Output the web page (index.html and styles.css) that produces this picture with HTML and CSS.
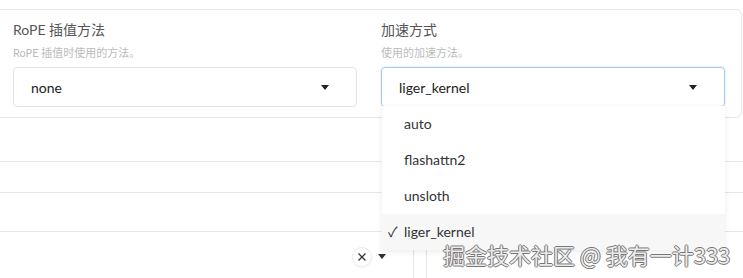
FILE: index.html
```html
<!doctype html>
<html lang="en">
<head>
<meta charset="UTF-8">
<title>加速方式</title>
<link rel="stylesheet" href="styles.css">
</head>
<body>
	<div class="page">
		<div class="card">
			<div class="field">
				<div class="label">RoPE 插值方法</div>
				<div class="info">RoPE 插值时使用的方法。</div>
				<div class="select">
					<span class="value">none</span>
					<span class="caret"></span>
				</div>
			</div>
			<div class="field">
				<div class="label">加速方式</div>
				<div class="info">使用的加速方法。</div>
				<div class="select focus">
					<span class="value">liger_kernel</span>
					<span class="caret"></span>
				</div>
				<ul class="options">
					<li>auto</li>
					<li>flashattn2</li>
					<li>unsloth</li>
					<li class="selected"><span class="check">✓</span>liger_kernel</li>
				</ul>
			</div>
		</div>

		<div class="row row1"></div>
		<div class="row row2"></div>
		<div class="row row3"></div>
		<div class="row row4">
			<div class="tools">
				<span class="clear">
					<svg width="10" height="10" viewBox="0 0 10 10"><path d="M1.5 1.5 L8.5 8.5 M8.5 1.5 L1.5 8.5" stroke="#333" stroke-width="1.3" fill="none"/></svg>
				</span>
				<span class="caret small"></span>
			</div>
			<div class="split"></div>
			<div class="split"></div>
		</div>

		<div class="mark">掘金技术社区 @ 我有一计333</div>
	</div>
</body>
</html>
```

FILE: styles.css
```css
body{
	margin:0;
	background:#fff;
	font-family:Lato, "Noto Sans CJK SC", sans-serif;
	color:#333;
}
.page{
	position:relative;
	width:743px;
	height:278px;
	overflow:hidden;
	padding-top:9px;
	box-sizing:border-box;
}
.card{
	margin-left:-10px;
	width:752px;
	height:109px;
	box-sizing:border-box;
	border:1px solid #e6e6e6;
	border-radius:0 6px 6px 0;
	padding:10px 17px 0 22px;
	display:grid;
	grid-template-columns:344px 344px;
	column-gap:24px;
	background:#fff;
}
.field{
	position:relative;
}
.label{
	font-size:14px;
	line-height:20px;
	color:#555;
}
.info{
	font-size:11px;
	line-height:16px;
	color:#bbb;
	margin-top:5px;
}
.select{
	margin-top:6px;
	height:40px;
	box-sizing:border-box;
	border:1px solid #e3e3e3;
	border-radius:4px;
	display:flex;
	align-items:center;
	justify-content:space-between;
	padding:0 27px 0 17px;
	font-size:14px;
	color:#222;
}
.select.focus{
	border-color:#a9ccee;
	box-shadow:0 0 0 1px #e8f2fc;
}
.caret{
	width:0;
	height:0;
	border-left:4px solid transparent;
	border-right:4px solid transparent;
	border-top:5px solid #222;
}
.options{
	position:absolute;
	z-index:5;
	left:1px;
	top:86px;
	width:343px;
	margin:0;
	padding:0;
	list-style:none;
	background:#fff;
	box-shadow:0 2px 6px rgba(0,0,0,0.08);
	font-size:14px;
	color:#333;
}
.options li{
	position:relative;
	height:36px;
	line-height:36px;
	padding-left:22px;
}
.options li.selected{
	background:#f7f7f7;
}
.check{
	position:absolute;
	left:6px;
	top:0;
}
.row{
	border-bottom:1px solid #e6e6e6;
}
.row1{ height:43px; }
.row2{ height:30px; }
.row3{ height:38px; }
.row4{
	display:flex;
	height:47px;
}
.tools{
	width:413px;
	display:flex;
	align-items:center;
	justify-content:flex-end;
	gap:6px;
	padding-right:27px;
	box-sizing:border-box;
	padding-top:2px;
}
.clear{
	width:18px;
	height:18px;
	border:1px solid #ececec;
	border-radius:50%;
	display:flex;
	align-items:center;
	justify-content:center;
	box-shadow:0 1px 2px rgba(0,0,0,0.06);
}
.caret.small{
	border-top-color:#333;
}
.split{
	width:12px;
	margin-top:17px;
	border-left:1px solid #e6e6e6;
}
.mark{
	position:absolute;
	z-index:9;
	left:443px;
	top:240px;
	font-family:"Noto Sans CJK SC", sans-serif;
	font-size:22px;
	line-height:29px;
	color:#ececec;
	text-shadow:1px 0 0 #777, -1px 0 0 #777, 0 1px 0 #777, 0 -1px 0 #777;
	white-space:nowrap;
}
```
